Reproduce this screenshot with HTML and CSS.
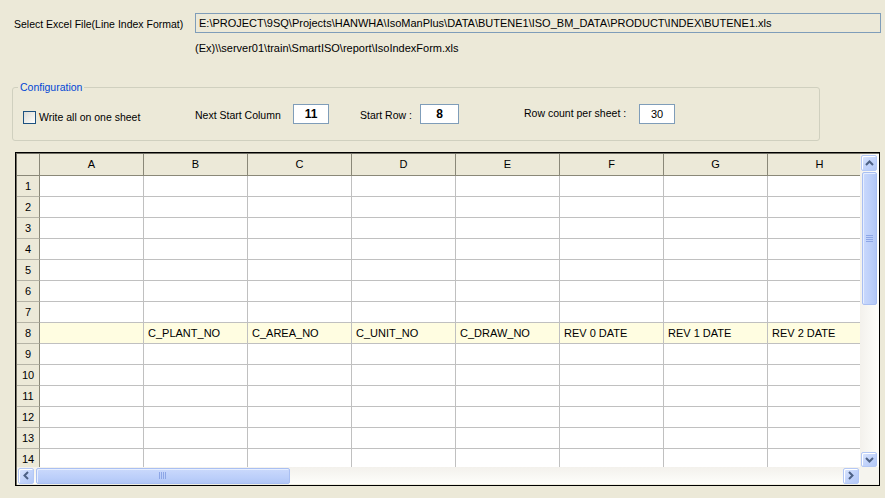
FILE: index.html
```html
<!DOCTYPE html>
<html>
<head>
<meta charset="utf-8">
<link rel="stylesheet" href="styles.css">
</head>
<body>
<div class="app">
  <div class="file-row">
    <span class="file-label">Select Excel File(Line Index Format)</span>
    <div class="path-box">E:\PROJECT\9SQ\Projects\HANWHA\IsoManPlus\DATA\BUTENE1\ISO_BM_DATA\PRODUCT\INDEX\BUTENE1.xls</div>
  </div>
  <div class="example">(Ex)\\server01\train\SmartISO\report\IsoIndexForm.xls</div>

  <fieldset class="config">
    <legend>Configuration</legend>
    <div class="config-row">
      <label class="check"><span class="box"></span>Write all on one sheet</label>
      <span class="lbl lbl-next">Next Start Column</span>
      <div class="num bold w36">11</div>
      <span class="lbl lbl-start">Start Row :</span>
      <div class="num bold w39">8</div>
      <span class="lbl lbl-count">Row count per sheet :</span>
      <div class="num w36">30</div>
    </div>
  </fieldset>

  <div class="grid-frame">
    <div class="viewport">
      <div class="sheet">
        <div class="hd corner"></div><div class="hd">A</div><div class="hd">B</div><div class="hd">C</div><div class="hd">D</div><div class="hd">E</div><div class="hd">F</div><div class="hd">G</div><div class="hd">H</div>

        <div class="rh">1</div><div class="c"></div><div class="c"></div><div class="c"></div><div class="c"></div><div class="c"></div><div class="c"></div><div class="c"></div><div class="c"></div>
        <div class="rh">2</div><div class="c"></div><div class="c"></div><div class="c"></div><div class="c"></div><div class="c"></div><div class="c"></div><div class="c"></div><div class="c"></div>
        <div class="rh">3</div><div class="c"></div><div class="c"></div><div class="c"></div><div class="c"></div><div class="c"></div><div class="c"></div><div class="c"></div><div class="c"></div>
        <div class="rh">4</div><div class="c"></div><div class="c"></div><div class="c"></div><div class="c"></div><div class="c"></div><div class="c"></div><div class="c"></div><div class="c"></div>
        <div class="rh">5</div><div class="c"></div><div class="c"></div><div class="c"></div><div class="c"></div><div class="c"></div><div class="c"></div><div class="c"></div><div class="c"></div>
        <div class="rh">6</div><div class="c"></div><div class="c"></div><div class="c"></div><div class="c"></div><div class="c"></div><div class="c"></div><div class="c"></div><div class="c"></div>
        <div class="rh">7</div><div class="c"></div><div class="c"></div><div class="c"></div><div class="c"></div><div class="c"></div><div class="c"></div><div class="c"></div><div class="c"></div>
        <div class="rh">8</div><div class="c hl"></div><div class="c hl">C_PLANT_NO</div><div class="c hl">C_AREA_NO</div><div class="c hl">C_UNIT_NO</div><div class="c hl">C_DRAW_NO</div><div class="c hl">REV 0 DATE</div><div class="c hl">REV 1 DATE</div><div class="c hl">REV 2 DATE</div>
        <div class="rh">9</div><div class="c"></div><div class="c"></div><div class="c"></div><div class="c"></div><div class="c"></div><div class="c"></div><div class="c"></div><div class="c"></div>
        <div class="rh">10</div><div class="c"></div><div class="c"></div><div class="c"></div><div class="c"></div><div class="c"></div><div class="c"></div><div class="c"></div><div class="c"></div>
        <div class="rh">11</div><div class="c"></div><div class="c"></div><div class="c"></div><div class="c"></div><div class="c"></div><div class="c"></div><div class="c"></div><div class="c"></div>
        <div class="rh">12</div><div class="c"></div><div class="c"></div><div class="c"></div><div class="c"></div><div class="c"></div><div class="c"></div><div class="c"></div><div class="c"></div>
        <div class="rh">13</div><div class="c"></div><div class="c"></div><div class="c"></div><div class="c"></div><div class="c"></div><div class="c"></div><div class="c"></div><div class="c"></div>
        <div class="rh">14</div><div class="c"></div><div class="c"></div><div class="c"></div><div class="c"></div><div class="c"></div><div class="c"></div><div class="c"></div><div class="c"></div>
      </div>
    </div>

    <div class="vscroll">
      <div class="sbtn vbtn-up">
        <svg width="9" height="6" viewBox="0 0 9 6"><path d="M1 5 L4.5 1.5 L8 5" fill="none" stroke="#4D6185" stroke-width="2"/></svg>
      </div>
      <div class="vthumb">
        <svg width="7" height="8" viewBox="0 0 7 8"><path d="M0 0.5H7M0 2.5H7M0 4.5H7M0 6.5H7" stroke="#8DA6E6" stroke-width="1"/></svg>
      </div>
      <div class="vtrack"></div>
      <div class="sbtn vbtn-down">
        <svg width="9" height="6" viewBox="0 0 9 6"><path d="M1 1 L4.5 4.5 L8 1" fill="none" stroke="#4D6185" stroke-width="2"/></svg>
      </div>
    </div>

    <div class="hscroll">
      <div class="sbtn hbtn-left">
        <svg width="6" height="9" viewBox="0 0 6 9"><path d="M5 1 L1.5 4.5 L5 8" fill="none" stroke="#4D6185" stroke-width="2"/></svg>
      </div>
      <div class="hthumb">
        <svg width="8" height="7" viewBox="0 0 8 7"><path d="M0.5 0V7M2.5 0V7M4.5 0V7M6.5 0V7" stroke="#8DA6E6" stroke-width="1"/></svg>
      </div>
      <div class="htrack"></div>
      <div class="sbtn hbtn-right">
        <svg width="6" height="9" viewBox="0 0 6 9"><path d="M1 1 L4.5 4.5 L1 8" fill="none" stroke="#4D6185" stroke-width="2"/></svg>
      </div>
    </div>
    <div class="sb-corner"></div>
  </div>
</div>
</body>
</html>
```

FILE: styles.css
```css
html, body {
  margin: 0;
  padding: 0;
  background: #ECE9D8;
}

body {
  width: 885px;
  height: 498px;
  overflow: hidden;
  font-family: "Liberation Sans", Arial, sans-serif;
  font-size: 11px;
  color: #000;
}

.app {
  display: flex;
  flex-direction: column;
}

/* top file row */
.file-row {
  display: flex;
  align-items: flex-start;
  margin-top: 13px;
  padding-left: 14px;
}

.file-label {
  width: 181px;
  padding-top: 5px;
  line-height: 13px;
  font-size: 10.5px;
  white-space: nowrap;
}

.path-box {
  box-sizing: border-box;
  width: 686px;
  height: 20px;
  border: 1px solid #7F9DB9;
  padding-left: 3px;
  line-height: 18px;
  font-size: 11px;
  white-space: nowrap;
  overflow: hidden;
}

.example {
  margin-top: 9px;
  margin-left: 195px;
  line-height: 13px;
  font-size: 11px;
}

/* configuration group */
.config {
  box-sizing: border-box;
  width: 808px;
  margin: 26px 0 0 12px;
  padding: 10px 0 16px 0;
  border: 1px solid #D0D0BF;
  border-radius: 3px;
  min-width: 0;
}

.config legend {
  margin-left: 5px;
  padding: 0 2px;
  color: #0046D5;
  font-size: 10.5px;
  line-height: 13px;
}

.config-row {
  display: flex;
  align-items: center;
  height: 20px;
  padding-left: 10px;
}

.check {
  display: flex;
  align-items: center;
  width: 172px;
  margin-top: 6px;
  font-size: 10.5px;
  white-space: nowrap;
}

.check .box {
  box-sizing: border-box;
  width: 13px;
  height: 13px;
  margin-right: 3px;
  border: 1px solid #1C5180;
  background: linear-gradient(135deg, #DCDCD7 0%, #F0F0EC 60%, #FFFFFF 100%);
}

.lbl {
  font-size: 10.5px;
  white-space: nowrap;
  line-height: 13px;
}

.lbl-next {
  width: 98px;
  margin-top: 3px;
}

.lbl-start {
  width: 60px;
  margin-left: 31px;
  margin-top: 3px;
}

.lbl-count {
  width: 115px;
  margin-left: 65px;
  margin-top: -2px;
}

.num {
  box-sizing: border-box;
  height: 20px;
  border: 1px solid #7F9DB9;
  background: #fff;
  text-align: center;
  line-height: 18px;
  font-size: 11px;
}

.num.bold {
  font-weight: bold;
  font-size: 12px;
}

.w36 { width: 36px; }
.w39 { width: 39px; }

/* grid */
.grid-frame {
  box-sizing: border-box;
  width: 865px;
  height: 334px;
  margin: 11px 0 0 15px;
  border: 1px solid #000;
  box-shadow: inset 1px 1px 0 #716F64, inset -1px -1px 0 #F1EFE2;
  padding: 1px;
  display: grid;
  grid-template-columns: 843px 19px;
  grid-template-rows: 313px 17px;
  background: #fff;
}

.viewport {
  overflow: hidden;
  background: #fff;
}

.sheet {
  display: grid;
  grid-template-columns: 23px repeat(8, 104px);
  grid-template-rows: 22px;
  grid-auto-rows: 21px;
  width: 855px;
}

.hd, .rh, .c {
  box-sizing: border-box;
  border-right: 1px solid #C0C0C0;
  border-bottom: 1px solid #C0C0C0;
  white-space: nowrap;
  overflow: hidden;
}

.hd {
  background: #ECE9D8;
  border-right-color: #8A8878;
  border-bottom-color: #8A8878;
  text-align: center;
  line-height: 21px;
}

.rh {
  background: #ECE9D8;
  border-right-color: #8A8878;
  border-bottom-color: #B5B3A6;
  text-align: center;
  line-height: 20px;
}

.c {
  background: #fff;
  padding-left: 4px;
  line-height: 20px;
}

.c.hl {
  background: #FFFDE1;
}

/* scrollbars */
.vscroll {
  display: flex;
  flex-direction: column;
  padding: 1px 2px 0 1px;
  background: linear-gradient(to right, #F3F1EC, #FEFEFB);
}

.sbtn {
  box-sizing: border-box;
  display: flex;
  align-items: center;
  justify-content: center;
  border: 1px solid #B4C8F6;
  border-radius: 2px;
  background: linear-gradient(135deg, #DCE6FD 0%, #C3D4FB 50%, #B3C8F7 100%);
  box-shadow: inset 1px 1px 0 #fff;
}

.vbtn-up {
  width: 16px;
  height: 16px;
}

.vthumb {
  box-sizing: border-box;
  width: 15px;
  height: 133px;
  margin-top: 1px;
  margin-left: 1px;
  border: 1px solid #A9BFF2;
  border-radius: 2px;
  background: linear-gradient(to right, #CAD9FC, #BCCFFA 60%, #B2C7F6);
  box-shadow: inset 1px 1px 0 #E6EEFF;
  display: flex;
  align-items: center;
  justify-content: center;
}

.vtrack {
  flex: 1;
}

.vbtn-down {
  width: 16px;
  height: 15px;
}

.hscroll {
  display: flex;
  align-items: center;
  padding-left: 1px;
  background: linear-gradient(to bottom, #F3F1EC, #FEFEFB);
}

.hbtn-left {
  width: 16px;
  height: 16px;
}

.hthumb {
  box-sizing: border-box;
  width: 254px;
  height: 16px;
  margin-left: 2px;
  border: 1px solid #A9BFF2;
  border-radius: 2px;
  background: linear-gradient(to bottom, #CAD9FC, #BCCFFA 60%, #B2C7F6);
  box-shadow: inset 1px 1px 0 #E6EEFF;
  display: flex;
  align-items: center;
  justify-content: center;
}

.htrack {
  flex: 1;
}

.hbtn-right {
  width: 16px;
  height: 16px;
  margin-right: 1px;
}

.sb-corner {
  background: #F5F4EE;
}
```
